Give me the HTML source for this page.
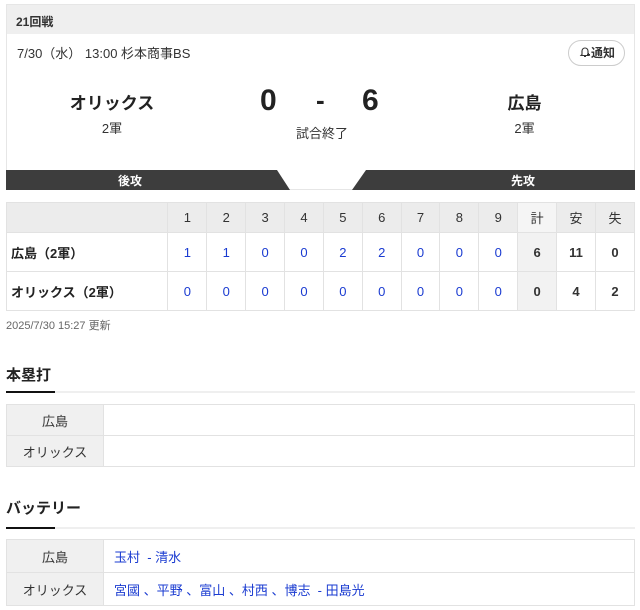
<!DOCTYPE html>
<html><head><meta charset="utf-8"><style>
*{margin:0;padding:0;box-sizing:border-box}
body{width:640px;height:610px;background:#fff;font-family:"Liberation Sans","Noto Sans CJK JP",sans-serif;color:#333;position:relative;overflow:hidden}
.abs{position:absolute}
.card{left:6px;top:4px;width:629px;height:186px;border:1px solid #e6e6e6}
.hd{left:0;top:0;width:627px;height:29px;background:#efefef;font-size:12px;font-weight:bold;padding:8px 9px}
table{border-collapse:collapse;position:absolute}
td{border:1px solid #e2e2e2;text-align:center;font-size:13px}
.sc td{width:39px}
.sc tr.h td{background:#ececec;height:30px;color:#333}
.sc tr.r td{height:39px;color:#1a3bd1}
.sc tr td.n{text-align:left;padding-left:4px;font-weight:bold;color:#222;width:162px}
.sc tr td.t{background:#f2f2f2;color:#333;font-weight:bold}
.sc tr td.b{color:#333;font-weight:bold}
.sec{font-size:15px;font-weight:bold;color:#222;left:6px}
.ln{left:6px;width:629px;height:2px;background:#efefef}
.ln i{display:block;width:49px;height:2px;background:#111}
.st td{height:31px;font-size:13px}
.st td.l{width:97px;background:#f0f0f0;color:#333}
.st td.v{text-align:left;padding-left:10px;color:#1a3bd1}
</style></head><body>
<div class="abs card">
 <div class="abs hd">21回戦</div>
 <div class="abs" style="left:10px;top:38px;font-size:13px">7/30（水） 13:00 杉本商事BS</div>
 <div class="abs" style="left:561px;top:35px;width:57px;height:26px;border:1px solid #ccc;border-radius:13px;font-size:12px;font-weight:bold;line-height:24px;padding-left:10px"><svg width="12" height="12" viewBox="0 0 12 12" style="vertical-align:-1px"><path d="M3 8.5V5a3 3 0 0 1 6 0v3.5L10 9.5H2z M5 10.5h2" fill="none" stroke="#333" stroke-width="1.1"/><path d="M8 8.5h3M9.5 7v3" stroke="#333" stroke-width="1"/></svg>通知</div>
 <div class="abs" style="left:40px;top:84px;width:130px;text-align:center;font-size:17px;font-weight:bold;color:#222">オリックス</div>
 <div class="abs" style="left:40px;top:113px;width:130px;text-align:center;font-size:13px">2軍</div>
 <div class="abs" style="left:450px;top:84px;width:135px;text-align:center;font-size:17px;font-weight:bold;color:#222">広島</div>
 <div class="abs" style="left:450px;top:113px;width:135px;text-align:center;font-size:13px">2軍</div>
 <div class="abs" style="left:253px;top:79px;font-size:30px;font-weight:bold;color:#222">0</div>
 <div class="abs" style="left:309px;top:80px;font-size:26px;font-weight:bold;color:#222">-</div>
 <div class="abs" style="left:355px;top:79px;font-size:30px;font-weight:bold;color:#222">6</div>
 <div class="abs" style="left:230px;top:118px;width:170px;text-align:center;font-size:13px">試合終了</div>
</div>
<svg class="abs" style="left:6px;top:170px" width="629" height="20"><polygon points="0,0 271,0 284,20 0,20" fill="#3d3d3d"/><polygon points="360,0 629,0 629,20 346,20" fill="#3d3d3d"/>
<text x="112" y="15" font-size="12" font-weight="bold" fill="#fff" font-family="Liberation Sans,Noto Sans CJK JP,sans-serif">後攻</text>
<text x="505" y="15" font-size="12" font-weight="bold" fill="#fff" font-family="Liberation Sans,Noto Sans CJK JP,sans-serif">先攻</text></svg>
<table class="sc" style="left:6px;top:202px;width:629px">
<tr class="h"><td class="n"></td><td>1</td><td>2</td><td>3</td><td>4</td><td>5</td><td>6</td><td>7</td><td>8</td><td>9</td><td style="background:#f5f5f5">計</td><td>安</td><td>失</td></tr>
<tr class="r"><td class="n">広島（2軍）</td><td>1</td><td>1</td><td>0</td><td>0</td><td>2</td><td>2</td><td>0</td><td>0</td><td>0</td><td class="t">6</td><td class="b">11</td><td class="b">0</td></tr>
<tr class="r"><td class="n">オリックス（2軍）</td><td>0</td><td>0</td><td>0</td><td>0</td><td>0</td><td>0</td><td>0</td><td>0</td><td>0</td><td class="t">0</td><td class="b">4</td><td class="b">2</td></tr>
</table>
<div class="abs" style="left:6px;top:317px;font-size:11px;color:#666">2025/7/30 15:27 更新</div>
<div class="abs sec" style="top:364px">本塁打</div>
<div class="abs ln" style="top:391px"><i></i></div>
<table class="st" style="left:6px;top:404px;width:629px">
<tr><td class="l">広島</td><td class="v"></td></tr>
<tr><td class="l">オリックス</td><td class="v"></td></tr>
</table>
<div class="abs sec" style="top:497px">バッテリー</div>
<div class="abs ln" style="top:527px"><i></i></div>
<table class="st" style="left:6px;top:539px;width:629px">
<tr><td class="l" style="height:33px">広島</td><td class="v">玉村 &nbsp;- 清水</td></tr>
<tr><td class="l" style="height:33px">オリックス</td><td class="v">宮國 、平野 、富山 、村西 、博志 &nbsp;- 田島光</td></tr>
</table>
</body></html>
